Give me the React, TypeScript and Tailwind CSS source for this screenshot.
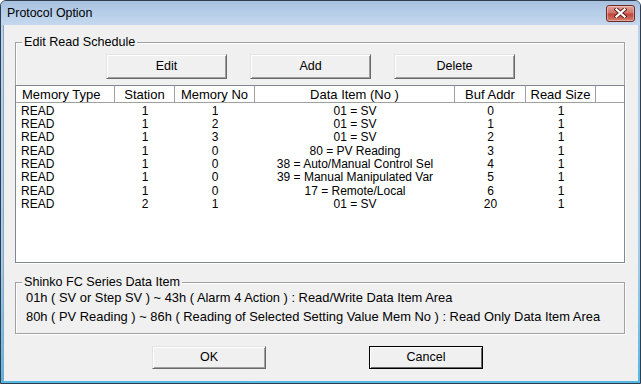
const COLS = [
  { key: "type", label: "Memory Type", w: "w-[99px]", align: "left" },
  { key: "station", label: "Station", w: "w-[60px]", align: "center" },
  { key: "mem", label: "Memory No", w: "w-[80px]", align: "center" },
  { key: "item", label: "Data Item (No )", w: "w-[200px]", align: "center" },
  { key: "buf", label: "Buf Addr", w: "w-[71px]", align: "center" },
  { key: "size", label: "Read Size", w: "w-[70px]", align: "center" },
] as const;

const ROWS = [
  ["READ", "1", "1", "01 = SV", "0", "1"],
  ["READ", "1", "2", "01 = SV", "1", "1"],
  ["READ", "1", "3", "01 = SV", "2", "1"],
  ["READ", "1", "0", "80 = PV Reading", "3", "1"],
  ["READ", "1", "0", "38 = Auto/Manual Control Sel", "4", "1"],
  ["READ", "1", "0", "39 = Manual Manipulated Var", "5", "1"],
  ["READ", "1", "0", "17 = Remote/Local", "6", "1"],
  ["READ", "2", "1", "01 = SV", "20", "1"],
];

function Btn({ label, w, h, focused }: { label: string; w: string; h: string; focused?: boolean }) {
  return (
    <button
      type="button"
      className={`${w} ${h} flex items-center justify-center border bg-[#f0f0f0] text-[12.5px] text-black ${
        focused
          ? "border-black shadow-[inset_1px_1px_0_#fff,inset_-1px_-1px_0_#696969]"
          : "border-t-[#e3e3e3] border-l-[#e3e3e3] border-r-[#696969] border-b-[#696969] shadow-[inset_1px_1px_0_#fff,inset_-1px_-1px_0_#a0a0a0]"
      }`}
    >
      {label}
    </button>
  );
}

function GroupLabel({ children }: { children: string }) {
  return (
    <span className="absolute left-[6px] top-[-8px] bg-[#f0f0f0] px-[2px] text-[12.6px] leading-[14px] text-black">
      {children}
    </span>
  );
}

export default function App() {
  return (
    <div className="w-[641px] h-[384px] font-['Liberation_Sans',Arial,sans-serif] text-[12px] text-black">
      <div className="flex h-full w-full flex-col rounded-t-[6px] border border-[#2f3d4d] bg-[linear-gradient(180deg,#aec6e2_0%,#bcd3ec_8%,#9fcbe8_70%,#52b8e6_100%)]">
        {/* title bar */}
        <div className="flex h-[24px] shrink-0 items-center justify-between pl-[6px] pr-[5px] bg-[linear-gradient(180deg,#a6c0de_0%,#b6cde8_45%,#c4d8ee_100%)] rounded-t-[5px]">
          <span className="text-[12.4px] leading-none text-black">Protocol Option</span>
          <div className="flex h-[17px] w-[29px] items-center justify-center rounded-[3px] border border-[#6e2a24] bg-[linear-gradient(180deg,#e2a197_0%,#d0736a_45%,#c0453a_55%,#d3806f_100%)] shadow-[inset_0_0_0_1px_rgba(255,255,255,0.35)]">
            <svg width="13" height="10" viewBox="0 0 13 10">
              <path d="M2.5 1.5 L10.5 8.5 M10.5 1.5 L2.5 8.5" stroke="#5a1a14" strokeWidth="4" strokeLinecap="square" />
              <path d="M2.5 1.5 L10.5 8.5 M10.5 1.5 L2.5 8.5" stroke="#fff" strokeWidth="2.3" strokeLinecap="square" />
            </svg>
          </div>
        </div>

        {/* client area */}
        <div className="mx-[2px] flex flex-1 flex-col bg-[#f0f0f0] pl-[12px] shadow-[inset_1px_0_0_#8aa6c4]">
          {/* Edit Read Schedule */}
          <div className="relative mt-[17px] flex h-[221px] w-[610px] flex-col border border-[#a0a0a0] shadow-[1px_1px_0_#fff,inset_1px_1px_0_#fff]">
            <GroupLabel>Edit Read Schedule</GroupLabel>
            <div className="flex gap-[23px] pl-[90px] pt-[11px]">
              <Btn label="Edit" w="w-[121px]" h="h-[25px]" />
              <Btn label="Add" w="w-[121px]" h="h-[25px]" />
              <Btn label="Delete" w="w-[121px]" h="h-[25px]" />
            </div>
            <div className="-mx-[1px] -mb-[1px] mt-[6px] flex flex-1 flex-col border border-[#828790] bg-white">
              <div className="flex h-[17px] shrink-0 border-b border-[#a0a0a0] bg-white text-[13px]">
                {COLS.map((c) => (
                  <div
                    key={c.key}
                    className={`${c.w} flex h-full items-center border-r border-[#a0a0a0] leading-none ${
                      c.align === "left" ? "pl-[6px]" : "justify-center"
                    }`}
                  >
                    {c.label}
                  </div>
                ))}
                <div className="flex-1" />
              </div>
              <div className="pt-[1px]">
                {ROWS.map((r, i) => (
                  <div key={i} className="flex h-[13.33px] items-center leading-none">
                    {r.map((v, j) => (
                      <div
                        key={j}
                        className={`${COLS[j].w} ${COLS[j].align === "left" ? "pl-[5px]" : "text-center"}`}
                      >
                        {v}
                      </div>
                    ))}
                  </div>
                ))}
              </div>
            </div>
          </div>

          {/* Shinko FC Series Data Item */}
          <div className="relative mt-[19px] h-[52px] w-[610px] border border-[#a0a0a0] pl-[10px] pt-[5px] text-[12.9px] leading-[19px] shadow-[1px_1px_0_#fff,inset_1px_1px_0_#fff]">
            <GroupLabel>Shinko FC Series Data Item</GroupLabel>
            <div>01h ( SV or Step SV ) ~ 43h ( Alarm 4 Action ) : Read/Write Data Item Area</div>
            <div>80h ( PV Reading ) ~ 86h ( Reading of Selected Setting Value Mem No ) : Read Only Data Item Area</div>
          </div>

          <div className="mt-[12px] flex gap-[103px] pl-[137px]">
            <Btn label="OK" w="w-[114px]" h="h-[23px]" />
            <Btn label="Cancel" w="w-[114px]" h="h-[23px]" focused />
          </div>
        </div>
        <div className="h-[2px] shrink-0" />
      </div>
    </div>
  );
}
